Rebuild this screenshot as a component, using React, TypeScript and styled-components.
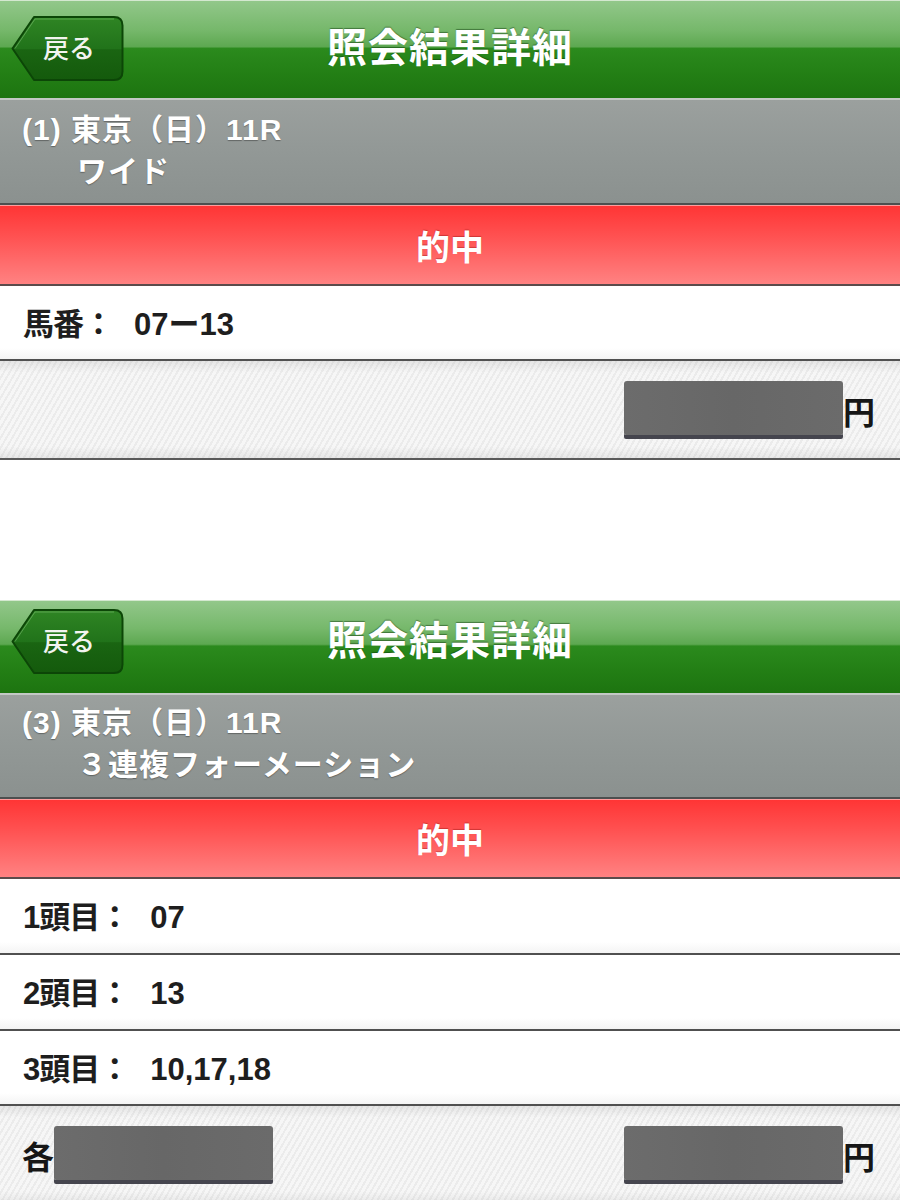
import React from 'react';
import styled, { createGlobalStyle } from 'styled-components';

const GlobalStyle = createGlobalStyle`
  * {
    box-sizing: border-box;
  }

  body {
    margin: 0;
    background: #ffffff;
    font-family: 'Liberation Sans', 'Noto Sans CJK JP', sans-serif;
  }
`;

const Page = styled.div`
  display: flex;
  flex-direction: column;
  gap: 140px;
  width: 900px;
`;

const Screen = styled.section`
  display: flex;
  flex-direction: column;
`;

const NavBar = styled.header<{ $h: number; $pb: number }>`
  display: grid;
  grid-template-columns: 1fr auto 1fr;
  align-items: center;
  height: ${(p) => p.$h}px;
  padding-bottom: ${(p) => p.$pb}px;
  border-top: 1px solid #d4e8d0;
  border-bottom: 2px solid #c3c8c5;
  background: linear-gradient(
    to bottom,
    #92c78a 0%,
    #76b86b 30%,
    #5da851 47%,
    #2b8a1d 49%,
    #237f15 75%,
    #1d7410 100%
  );
`;

const BackButton = styled.button`
  position: relative;
  justify-self: start;
  width: 113px;
  height: 67px;
  margin-left: 11px;
  padding: 0 0 3px 22px;
  border: none;
  background: none;
  color: #f2f4f0;
  font-family: 'Noto Sans CJK JP', sans-serif;
  font-size: 26px;
  font-weight: 500;
  text-align: left;
  cursor: pointer;

  svg {
    position: absolute;
    inset: 0;
    z-index: 0;
  }

  span {
    position: relative;
    z-index: 1;
    margin-left: 10px;
  }
`;

const Title = styled.h1`
  margin: -6px 0 0;
  color: #ffffff;
  font-family: 'Noto Sans CJK JP', sans-serif;
  font-size: 40px;
  font-weight: 700;
  line-height: 1;
  letter-spacing: 1px;
  text-shadow: 0 -1px 1px rgba(0, 40, 0, 0.45);
`;

const RaceBand = styled.div<{ $h: number; $pt: number }>`
  display: flex;
  flex-direction: column;
  height: ${(p) => p.$h}px;
  padding: ${(p) => p.$pt}px 0 0 22px;
  border-bottom: 2px solid #4d4f4f;
  background: linear-gradient(to bottom, #9ba09e 0%, #929896 50%, #8b918f 100%);
  color: #ffffff;
  font-size: 30px;
  font-weight: 700;
  line-height: 42px;
  letter-spacing: 1px;
  text-shadow: 0 1px 1px rgba(40, 40, 40, 0.45);
`;

const BetType = styled.div`
  padding-left: 55px;
`;

const HitBand = styled.div<{ $h: number }>`
  display: flex;
  align-items: center;
  justify-content: center;
  height: ${(p) => p.$h}px;
  border-top: 1px solid #ff9d9d;
  border-bottom: 2px solid #5a4b4b;
  background: linear-gradient(to bottom, #ff3535 0%, #ff5252 40%, #ff8282 100%);
  color: #ffffff;
  font-family: 'Noto Sans CJK JP', sans-serif;
  font-size: 34px;
  font-weight: 700;
  text-shadow: 0 -1px 1px rgba(120, 0, 0, 0.35);
`;

const InfoRow = styled.div<{ $h: number }>`
  height: ${(p) => p.$h}px;
  padding: 3px 0 0 23px;
  border-bottom: 2px solid #505050;
  background: linear-gradient(to bottom, #ffffff 0%, #ffffff 85%, #f4f4f4 100%);
  color: #1e1e1e;
  font-size: 31px;
  font-weight: 700;
  line-height: ${(p) => p.$h - 4}px;
  white-space: nowrap;
`;

const Label = styled.span`
  letter-spacing: -1px;
`;

const Value = styled.span`
  margin-left: 21px;
`;

const AmountRow = styled.div<{ $h: number; $split?: boolean }>`
  display: flex;
  align-items: center;
  justify-content: ${(p) => (p.$split ? 'space-between' : 'flex-end')};
  height: ${(p) => p.$h}px;
  padding: 0 25px 0 22px;
  border-bottom: 2px solid #5a5a5a;
  background:
    linear-gradient(to bottom, rgba(0, 0, 0, 0.07) 0%, rgba(0, 0, 0, 0) 12%, rgba(0, 0, 0, 0) 88%, rgba(0, 0, 0, 0.06) 100%),
    repeating-linear-gradient(120deg, #f6f6f6 0px, #f6f6f6 3px, #ebebeb 3px, #ebebeb 5px);
  color: #161616;
  font-size: 32px;
  font-weight: 700;
`;

const AmountGroup = styled.div`
  display: flex;
  align-items: center;
`;

const Masked = styled.div`
  width: 219px;
  height: 54px;
  margin-top: -3px;
  border-radius: 3px 3px 2px 2px;
  background: linear-gradient(to right, #6c6c6c 0%, #676767 50%, #6b6b6b 100%);
  box-shadow: 0 4px 0 #45454e;
`;

const Yen = styled.span`
  font-family: 'Noto Sans CJK JP', sans-serif;
`;

const BackShape = () => (
  <svg width="113" height="67" viewBox="0 0 113 67">
    <defs>
      <linearGradient id="backFill" x1="0" y1="0" x2="0" y2="1">
        <stop offset="0" stopColor="#2f8524" />
        <stop offset="0.5" stopColor="#21731a" />
        <stop offset="0.52" stopColor="#1a6512" />
        <stop offset="1" stopColor="#145a0c" />
      </linearGradient>
    </defs>
    <path
      d="M1.5 33.5 L23 2 H103 Q111.5 2 111.5 10.5 V56.5 Q111.5 65 103 65 H23 Z"
      fill="url(#backFill)"
      stroke="#0c4607"
      strokeWidth="2"
      strokeLinejoin="round"
    />
    <path
      d="M4 33.5 L24 4 H103"
      fill="none"
      stroke="rgba(180,230,170,0.35)"
      strokeWidth="1"
    />
  </svg>
);

const Header = ({ h, pb }: { h: number; pb: number }) => (
  <NavBar $h={h} $pb={pb}>
    <BackButton>
      <BackShape />
      <span>戻る</span>
    </BackButton>
    <Title>照会結果詳細</Title>
    <div />
  </NavBar>
);

export default function App() {
  return (
    <>
      <GlobalStyle />
      <Page>
        <Screen>
          <Header h={100} pb={3} />
          <RaceBand $h={105} $pt={9}>
            <div>(1) 東京（日）11R</div>
            <BetType>ワイド</BetType>
          </RaceBand>
          <HitBand $h={81}>的中</HitBand>
          <InfoRow $h={75}>
            <Label>馬番：</Label>
            <Value>07ー13</Value>
          </InfoRow>
          <AmountRow $h={99}>
            <AmountGroup>
              <Masked />
              <Yen>円</Yen>
            </AmountGroup>
          </AmountRow>
        </Screen>

        <Screen>
          <Header h={95} pb={12} />
          <RaceBand $h={104} $pt={7}>
            <div>(3) 東京（日）11R</div>
            <BetType>３連複フォーメーション</BetType>
          </RaceBand>
          <HitBand $h={80}>的中</HitBand>
          <InfoRow $h={76}>
            <Label>1頭目：</Label>
            <Value>07</Value>
          </InfoRow>
          <InfoRow $h={76}>
            <Label>2頭目：</Label>
            <Value>13</Value>
          </InfoRow>
          <InfoRow $h={75}>
            <Label>3頭目：</Label>
            <Value>10,17,18</Value>
          </InfoRow>
          <AmountRow $h={99} $split>
            <AmountGroup>
              <Yen>各</Yen>
              <Masked />
            </AmountGroup>
            <AmountGroup>
              <Masked />
              <Yen>円</Yen>
            </AmountGroup>
          </AmountRow>
        </Screen>
      </Page>
    </>
  );
}
